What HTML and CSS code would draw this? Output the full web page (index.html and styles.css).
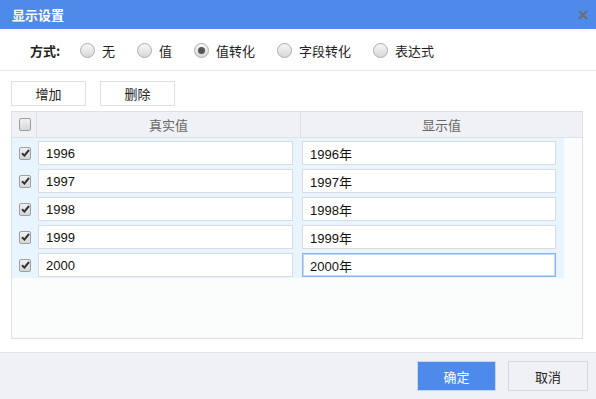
FILE: index.html
```html
<!DOCTYPE html>
<html lang="zh-CN">
<head>
  <meta charset="UTF-8">
  <title>显示设置</title>
  <link rel="stylesheet" href="styles.css">
</head>
<body>
  <div class="dialog">
    <div class="titlebar">
      <span class="title">显示设置</span>
      <span class="close">
        <svg width="10" height="10" viewBox="0 0 10 10"><path d="M1 1L9 9M9 1L1 9" stroke="#6b6e75" stroke-width="2.2"/></svg>
      </span>
    </div>

    <!-- display mode -->
    <div class="mode-row">
      <span class="mode-label">方式:</span>
      <span class="opt"><span class="radio"></span>无</span>
      <span class="opt"><span class="radio"></span>值</span>
      <span class="opt"><span class="radio on"></span>值转化</span>
      <span class="opt"><span class="radio"></span>字段转化</span>
      <span class="opt"><span class="radio"></span>表达式</span>
    </div>

    <div class="content">
      <div class="toolbar">
        <button type="button" class="btn">增加</button>
        <button type="button" class="btn">删除</button>
      </div>

      <div class="grid">
        <div class="grid-head">
          <div class="cell-chk"><span class="chk"></span></div>
          <div class="head-col">真实值</div>
          <div class="head-col last">显示值</div>
        </div>
        <div class="grid-body">
          <div class="row">
            <div class="cell-chk"><span class="chk on"><svg width="9" height="8" viewBox="0 0 9 8"><path d="M1 4.2L3.4 6.6L8 1" fill="none" stroke="#333" stroke-width="2"/></svg></span></div>
            <div class="cell"><input type="text" value="1996"></div>
            <div class="cell right"><input type="text" value="1996年"></div>
          </div>
          <div class="row">
            <div class="cell-chk"><span class="chk on"><svg width="9" height="8" viewBox="0 0 9 8"><path d="M1 4.2L3.4 6.6L8 1" fill="none" stroke="#333" stroke-width="2"/></svg></span></div>
            <div class="cell"><input type="text" value="1997"></div>
            <div class="cell right"><input type="text" value="1997年"></div>
          </div>
          <div class="row">
            <div class="cell-chk"><span class="chk on"><svg width="9" height="8" viewBox="0 0 9 8"><path d="M1 4.2L3.4 6.6L8 1" fill="none" stroke="#333" stroke-width="2"/></svg></span></div>
            <div class="cell"><input type="text" value="1998"></div>
            <div class="cell right"><input type="text" value="1998年"></div>
          </div>
          <div class="row">
            <div class="cell-chk"><span class="chk on"><svg width="9" height="8" viewBox="0 0 9 8"><path d="M1 4.2L3.4 6.6L8 1" fill="none" stroke="#333" stroke-width="2"/></svg></span></div>
            <div class="cell"><input type="text" value="1999"></div>
            <div class="cell right"><input type="text" value="1999年"></div>
          </div>
          <div class="row">
            <div class="cell-chk"><span class="chk on"><svg width="9" height="8" viewBox="0 0 9 8"><path d="M1 4.2L3.4 6.6L8 1" fill="none" stroke="#333" stroke-width="2"/></svg></span></div>
            <div class="cell"><input type="text" value="2000"></div>
            <div class="cell right"><input type="text" class="focused" value="2000年"></div>
          </div>
        </div>
      </div>
    </div>

    <div class="footer">
      <button type="button" class="btn-ok">确定</button>
      <button type="button" class="btn-cancel">取消</button>
    </div>
  </div>
</body>
</html>
```

FILE: styles.css
```css
* {
  box-sizing: border-box;
}
body {
  margin: 0;
  font-family: "Noto Sans CJK SC", "Liberation Sans", sans-serif;
  font-size: 13px;
  color: #222;
  background: #fff;
}
.dialog {
  width: 596px;
  height: 399px;
  display: flex;
  flex-direction: column;
  background: #fff;
}
.titlebar {
  height: 29px;
  background: #4d8ae9;
  display: flex;
  align-items: center;
  justify-content: space-between;
  padding: 0 8px 0 12px;
}
.title {
  color: #fff;
  font-weight: bold;
  font-size: 13px;
}
.close {
  display: flex;
  margin-top: 1px;
}
.mode-row {
  height: 42px;
  border-bottom: 1px solid #e2e5ea;
  display: flex;
  align-items: center;
  padding: 1px 0 0 30px;
}
.mode-label {
  font-weight: bold;
  margin-right: 22px;
  width: 28px;
  white-space: nowrap;
  flex-shrink: 0;
}
.opt {
  display: flex;
  align-items: center;
  margin-right: 22px;
  white-space: nowrap;
}
.radio {
  flex-shrink: 0;
  width: 15px;
  height: 15px;
  border-radius: 50%;
  border: 1px solid #acacac;
  background: linear-gradient(#f6f6f6, #d8d8d8);
  margin-right: 7px;
  display: flex;
  align-items: center;
  justify-content: center;
}
.radio.on::after {
  content: "";
  width: 7px;
  height: 7px;
  border-radius: 50%;
  background: #555;
}
.content {
  flex: 1;
  padding: 10px 13px 13px 11px;
  display: flex;
  flex-direction: column;
}
.toolbar {
  display: flex;
  gap: 14px;
  margin-bottom: 5px;
}
.btn {
  width: 75px;
  height: 25px;
  border: 1px solid #dde0e5;
  background: #fff;
  font-family: inherit;
  font-size: 13px;
  color: #222;
  padding: 0;
}
.grid {
  flex: 1;
  border: 1px solid #dcdfe4;
  background: #fbfcfc;
  display: flex;
  flex-direction: column;
}
.grid-head {
  height: 26px;
  display: flex;
  background: #f0f1f5;
  border-bottom: 1px solid #dde3ea;
}
.cell-chk {
  width: 25px;
  display: flex;
  align-items: center;
  justify-content: center;
  padding-left: 1px;
}
.grid-head .cell-chk {
  border-right: 1px solid #dde0e5;
}
.head-col {
  width: 264px;
  display: flex;
  align-items: center;
  justify-content: center;
  color: #666;
  border-right: 1px solid #dde0e5;
}
.head-col.last {
  flex: 1;
  border-right: none;
}
.chk {
  width: 12px;
  height: 13px;
  border: 1px solid #9d9d9d;
  border-radius: 2px;
  background: linear-gradient(#f2f2f2, #d6d6d6);
  display: flex;
  align-items: center;
  justify-content: center;
}
.grid-body {
  width: 552px;
  background: #e8f4fe;
  padding-top: 3px;
  padding-bottom: 1px;
  display: flex;
  flex-direction: column;
  gap: 4px;
}
.row {
  display: flex;
  height: 24px;
}
.cell {
  width: 264px;
  padding: 0 8px 0 1px;
}
.cell.right {
  width: 263px;
}
.cell input {
  width: 100%;
  height: 24px;
  border: 1px solid #d7dce3;
  background: #fff;
  font-family: "Liberation Sans", "Noto Sans CJK SC", sans-serif;
  font-size: 13px;
  color: #111;
  padding: 0 7px;
  outline: none;
}
.cell input.focused {
  border: 1px solid #8ab3f2;
  box-shadow: 0 0 0 1px #c4d9fa inset;
}
.footer {
  height: 47px;
  border-top: 1px solid #dfe2e7;
  background: #f0f1f5;
  display: flex;
  justify-content: flex-end;
  align-items: flex-start;
  gap: 12px;
  padding: 8px 8px 0 0;
}
.btn-ok, .btn-cancel {
  height: 30px;
  font-family: inherit;
  font-size: 13px;
  padding: 0;
}
.btn-ok {
  width: 79px;
  background: #4d8ae9;
  color: #fff;
  border: 1px solid #c6d6ee;
}
.btn-cancel {
  width: 80px;
  background: #f0f1f5;
  color: #222;
  border: 1px solid #d4d7de;
}
```
